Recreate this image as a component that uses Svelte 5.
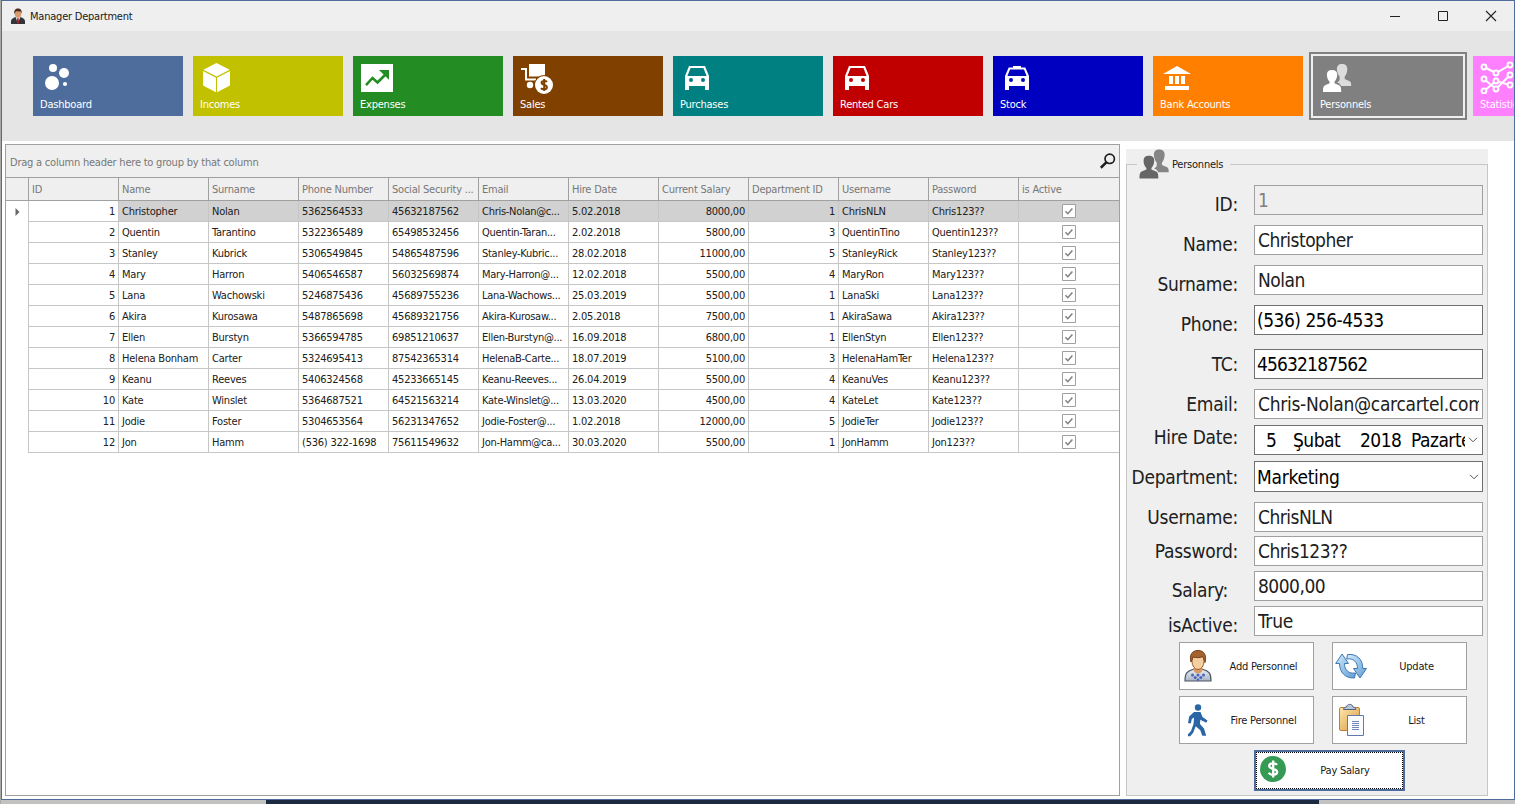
<script>
  const tiles = [
    { label: 'Dashboard', color: '#4f6d9c', icon: 'dots' },
    { label: 'Incomes', color: '#c2c100', icon: 'cube' },
    { label: 'Expenses', color: '#238c23', icon: 'chart' },
    { label: 'Sales', color: '#804000', icon: 'sales' },
    { label: 'Purchases', color: '#008080', icon: 'car' },
    { label: 'Rented Cars', color: '#c00000', icon: 'car' },
    { label: 'Stock', color: '#0000c0', icon: 'taxi' },
    { label: 'Bank Accounts', color: '#ff8000', icon: 'bank' },
    { label: 'Personnels', color: '#808080', icon: 'people', selected: true },
    { label: 'Statistics', color: '#ff80ff', icon: 'stats' }
  ];

  const headers = ['ID', 'Name', 'Surname', 'Phone Number', 'Social Security ...', 'Email', 'Hire Date',
    'Current Salary', 'Department ID', 'Username', 'Password', 'is Active'];
  const rightAligned = [0, 7, 8];

  const rows = [
    ['1', 'Christopher', 'Nolan', '5362564533', '45632187562', 'Chris-Nolan@c...', '5.02.2018', '8000,00', '1', 'ChrisNLN', 'Chris123??'],
    ['2', 'Quentin', 'Tarantino', '5322365489', '65498532456', 'Quentin-Taran...', '2.02.2018', '5800,00', '3', 'QuentinTino', 'Quentin123??'],
    ['3', 'Stanley', 'Kubrick', '5306549845', '54865487596', 'Stanley-Kubric...', '28.02.2018', '11000,00', '5', 'StanleyRick', 'Stanley123??'],
    ['4', 'Mary', 'Harron', '5406546587', '56032569874', 'Mary-Harron@...', '12.02.2018', '5500,00', '4', 'MaryRon', 'Mary123??'],
    ['5', 'Lana', 'Wachowski', '5246875436', '45689755236', 'Lana-Wachows...', '25.03.2019', '5500,00', '1', 'LanaSki', 'Lana123??'],
    ['6', 'Akira', 'Kurosawa', '5487865698', '45689321756', 'Akira-Kurosaw...', '2.05.2018', '7500,00', '1', 'AkiraSawa', 'Akira123??'],
    ['7', 'Ellen', 'Burstyn', '5366594785', '69851210637', 'Ellen-Burstyn@...', '16.09.2018', '6800,00', '1', 'EllenStyn', 'Ellen123??'],
    ['8', 'Helena Bonham', 'Carter', '5324695413', '87542365314', 'HelenaB-Carte...', '18.07.2019', '5100,00', '3', 'HelenaHamTer', 'Helena123??'],
    ['9', 'Keanu', 'Reeves', '5406324568', '45233665145', 'Keanu-Reeves...', '26.04.2019', '5500,00', '4', 'KeanuVes', 'Keanu123??'],
    ['10', 'Kate', 'Winslet', '5364687521', '64521563214', 'Kate-Winslet@...', '13.03.2020', '4500,00', '4', 'KateLet', 'Kate123??'],
    ['11', 'Jodie', 'Foster', '5304653564', '56231347652', 'Jodie-Foster@...', '1.02.2018', '12000,00', '5', 'JodieTer', 'Jodie123??'],
    ['12', 'Jon', 'Hamm', '(536) 322-1698', '75611549632', 'Jon-Hamm@ca...', '30.03.2020', '5500,00', '1', 'JonHamm', 'Jon123??']
  ];

  // gap: space above the row; drop: label offset below the top of the field
  const fields = [
    { label: 'ID:', value: '1', gap: 0, drop: 4, kind: 'off' },
    { label: 'Name:', value: 'Christopher', gap: 10, drop: 4 },
    { label: 'Surname:', value: 'Nolan', gap: 10, drop: 4 },
    { label: 'Phone:', value: '(536) 256-4533', gap: 10, drop: 4, kind: 'native' },
    { label: 'TC:', value: '45632187562', gap: 14, drop: 0, kind: 'native digits' },
    { label: 'Email:', value: 'Chris-Nolan@carcartel.com', gap: 10, drop: 0, kind: 'wide' },
    { label: 'Hire Date:', date: ['5', 'Şubat', '2018', 'Pazartesi'], gap: 6, drop: -3, kind: 'native' },
    { label: 'Department:', value: 'Marketing', gap: 6, drop: 1, kind: 'native wide', combo: true },
    { label: 'Username:', value: 'ChrisNLN', gap: 10, drop: 0 },
    { label: 'Password:', value: 'Chris123??', gap: 4, drop: 0 },
    { label: 'Salary:', value: '8000,00', gap: 5, drop: 4, shift: 10 },
    { label: 'isActive:', value: 'True', gap: 5, drop: 4, kind: 'wide' }
  ];
</script>

{#snippet people(front, back)}
  <path fill={back} d="M29 8c3.600 0 5.500 2 5.300 5.500-.2 3.500-1.600 6-2.600 7v2.500l5 2.200c1.200.7 1.500 2 1.500 4.800H28c-.5-1.800-1.600-2.600-4-3.800 1.500-.8 2.400-1.500 2.600-2.300V20.500c-1.300-1.200-2.500-4-2.700-7C23.700 10 25.500 8 29 8z" />
  <path fill={front} d="M19 14c3.600 0 5.300 1.800 5.200 5-.1 3-1.400 5.500-2.700 6.800v1.500l4.500 1.900c1.800.8 2.200 2.600 2.200 6.800H10c0-4.200.4-6 2.200-6.800l4.400-1.900v-1.500c-1.400-1.300-2.600-3.800-2.700-6.800-.1-3.200 1.600-5 5.100-5z" />
{/snippet}

{#snippet tileIcon(name, color)}
  <svg width="42" height="38" viewBox="0 0 42 38" fill="#fff">
    {#if name === 'dots'}
      <circle cx="20" cy="12" r="4" /><circle cx="31" cy="17" r="5" />
      <circle cx="19" cy="27" r="7" /><circle cx="32" cy="28" r="2.100" />
    {:else if name === 'cube'}
      <path d="M23.500 7 36.600 13.700 23.500 20.600 10.400 13.700zM10 15l13 6.700V36.300L10 29.500zM37 15l-13 6.700V36.300l13-6.800z" />
    {:else if name === 'chart'}
      <path d="M8 8h32v28H8z" />
      <path d="M13 29.200 19.500 22l5 4.500 7.500-7.500" fill="none" stroke={color} stroke-width="2.600" />
      <path d="M26 14h10v9.800z" fill={color} />
    {:else if name === 'sales'}
      <path d="M16 8h16v12.500H16z" />
      <path d="M8 13h5v10.500h10" fill="none" stroke="#fff" stroke-width="2" />
      <circle cx="17" cy="29" r="3.200" />
      <circle cx="31" cy="29" r="10" fill={color} /><circle cx="31" cy="29" r="9" />
      <path d="M34 25.800c-.8-1-5.200-1.500-5.400 1 0 2.800 5.300 1.500 5.300 4.400 0 2.700-4.800 2.400-5.900.9M31.200 23v12" fill="none" stroke={color} stroke-width="2" />
    {:else if name === 'car' || name === 'taxi'}
      {#if name === 'car'}
        <path fill-rule="evenodd" d="M16 10h16l4 10v14h-4v-4H16v4h-4V20zM17.600 12l-3.200 8h19.200l-3.200-8z" />
      {:else}
        <path fill-rule="evenodd" d="M20 10h8v1.500h4.300L36 20v14h-4v-4H16v4h-4V20l3.700-8.500H20zM17 13.500 14.400 20h19.200L31 13.500z" />
      {/if}
      <circle cx="18" cy="24" r="2" fill={color} /><circle cx="30" cy="24" r="2" fill={color} />
    {:else if name === 'bank'}
      <path d="M24 10 38 18H10zM16 20h4v8h-4zM22 20h4v8h-4zM28 20h4v8h-4zM12 30h24v4H12z" />
    {:else if name === 'people'}
      {@render people('#fff', '#dcdcdc')}
    {:else}
      <g fill={color} stroke="#fff" stroke-width="2">
        <path fill="none" d="m11 11 12 6 14-8M11 23l12 10 14-14M11 35l12-10 14 4" />
        {#each [[11, 11], [23, 17], [37, 9], [11, 23], [23, 33], [37, 19], [11, 35], [23, 25], [37, 29]] as [x, y]}
          <circle cx={x} cy={y} r="2.400" />
        {/each}
      </g>
    {/if}
  </svg>
{/snippet}

<div class="desk">
  <div class="window">
    <header>
      <svg width="16" height="17" viewBox="0 0 16 17">
        <path d="M1 16v-3c0-2 2-3 4.500-4h5C13 10 15 11 15 13v3z" fill="#30343b" />
        <path d="m5.500 9 2.300 6L10.500 9z" fill="#e8e4e0" /><path d="m7.400 10-.8 4.500L8 16l1-1.500L8.500 10z" fill="#b01c22" />
        <ellipse cx="8" cy="5.500" rx="3.300" ry="4.300" fill="#d79a6c" />
        <path d="M4.300 6C3.800 2 5.500.5 8 .5s4.200 1.700 3.700 5.300L10.800 3.500 6 3.200z" fill="#4b2c1a" />
      </svg>
      <span class="title">Manager Department</span>
      <svg class="controls" width="112" height="12" viewBox="0 0 112 12" fill="none" stroke="#222">
        <path d="M1 6.500h10M49.500 1.500h9v9h-9z" /><path d="m97 1 10 10M107 1 97 11" stroke-width="1.100" />
      </svg>
    </header>

    <nav>
      {#each tiles as t}
        <div class="tile" class:selected={t.selected} style:background={t.color}>
          {@render tileIcon(t.icon, t.color)}
          <span>{t.label}</span>
        </div>
      {/each}
    </nav>

    <main>
      <section class="grid">
        <div class="groupbar">
          <span>Drag a column header here to group by that column</span>
          <svg width="16" height="16" viewBox="0 0 16 16" fill="none" stroke="#1e1e1e">
            <circle cx="9.700" cy="5.800" r="4.700" stroke-width="1.700" /><path d="m6.300 9.400-5.500 5.300" stroke-width="2.600" />
          </svg>
        </div>
        <div class="line head">
          <div class="mark"></div>
          {#each headers as h}<div class="cell">{h}</div>{/each}
        </div>
        {#each rows as r, i}
          <div class="line" class:current={i === 0}>
            <div class="mark">
              {#if i === 0}<svg width="5" height="8" viewBox="0 0 5 8"><path d="M.5 0 4.500 4 .5 8z" fill="#666" /></svg>{/if}
            </div>
            {#each r as c, j}<div class="cell" class:right={rightAligned.includes(j)} class:mail={j === 5}>{c}</div>{/each}
            <div class="cell check">
              <svg width="14" height="14" viewBox="0 0 14 14" fill="none">
                <path d="M.5.5h13v13H.5z" fill="#fff" stroke="#a0a0a0" /><path d="m3.500 7.200 2.300 2.500 4.600-5.300" stroke="#808080" stroke-width="1.500" />
              </svg>
            </div>
          </div>
        {/each}
      </section>

      <section class="panel">
        <div class="legend">
          <svg width="30" height="30" viewBox="9.500 7.500 29 29">{@render people('#666', '#858585')}</svg>
          <span>Personnels</span>
        </div>
        <div class="frame">
          {#each fields as f}
            <div class="field" style:margin-top="{f.gap}px">
              <div class="label" style:margin-top="{f.drop}px" style:padding-right="{f.shift ?? 0}px">{f.label}</div>
              <div class="input {f.kind ?? ''}" class:combo={f.combo}>
                {#if f.date}
                  <div class="date">{#each f.date as d}<span>{d}</span>{/each}</div>
                {:else}
                  <div class="value">{f.value}</div>
                {/if}
                {#if f.date || f.combo}
                  <svg width="10" height="6" viewBox="0 0 10 6" fill="none" stroke="#555"><path d="m1 .8 4 4 4-4" /></svg>
                {/if}
              </div>
            </div>
          {/each}

          <div class="buttons">
            <button>
              <svg width="32" height="34" viewBox="0 0 32 34">
                <defs><linearGradient id="coat" x2="0" y2="1"><stop stop-color="#e9eef5" /><stop offset="1" stop-color="#a9b4c6" /></linearGradient></defs>
                <path d="M3 32c0-7 1.500-10 8-11.500h10C27.500 22 29 25 29 32z" fill="url(#coat)" stroke="#4e5462" stroke-width="1.200" />
                <path d="M11 19h10l-1 3.500c-2 2.500-6 2.500-8 0z" fill="#d99c62" />
                <ellipse cx="16" cy="12.500" rx="6" ry="8" fill="#f5cf9f" stroke="#9a5a2b" />
                <path d="M9 13C7 6 10 1.500 16 1.500S25 6 23 13.500c-.5-3-1.500-4.500-2.500-6-3 2-7 1-9.500.5-.8 1.500-1 3-2 5z" fill="#a5612e" stroke="#75401c" />
                <g fill="#4b66bd"><circle cx="10.500" cy="26" r="1.500" /><circle cx="16" cy="26" r="1.500" /><circle cx="21.500" cy="26" r="1.500" /><circle cx="13.200" cy="28.500" r="1.500" /><circle cx="18.800" cy="28.500" r="1.500" /><circle cx="16" cy="30.800" r="1.200" /></g>
              </svg>
              <span>Add Personnel</span>
            </button>
            <button>
              <svg width="32" height="34" viewBox="0 0 32 34">
                <defs><linearGradient id="sync" x2="1" y2="1"><stop stop-color="#d3ecfb" /><stop offset="1" stop-color="#5f9dd6" /></linearGradient></defs>
                <g fill="url(#sync)" stroke="#3c78b4" stroke-linejoin="round">
                  <path d="M7 5 .7 14.500H4.500C4.500 23 10 29.500 19.500 29l1-5C13 25 9.500 20.500 9.500 14.500H13.500z" />
                  <path d="M25 29 31.500 19.500H27.700C28 10.500 22 4.500 12.500 5.500l-.8 4.500C19 9 22.500 13.500 22.500 19.500H18.500z" />
                </g>
              </svg>
              <span>Update</span>
            </button>
            <button>
              <svg width="32" height="34" viewBox="0 0 32 34" fill="#2a66a6">
                <circle cx="16" cy="4.500" r="3.200" />
                <path d="M12 9h6.500l2 5 5 3.500-1.200 2.200-6-3-.3 4.300 4 4.500 2.200 7.200h-3.900l-2-5.500-4.600-4-2.500 6.500-3 3.500H6l-.2-1.700 3.200-3.500 2.500-7 .6-6.500-2.300 1.500L8.800 20.500 6 20 7.200 13.500z" />
              </svg>
              <span>Fire Personnel</span>
            </button>
            <button>
              <svg width="32" height="34" viewBox="0 0 32 34">
                <defs><linearGradient id="board" x2="1" y2="1"><stop stop-color="#ffe7ad" /><stop offset="1" stop-color="#d99a40" /></linearGradient></defs>
                <rect x="4.500" y="4.500" width="20" height="23" rx="1.500" fill="url(#board)" stroke="#bb8235" />
                <path d="M8.500 6.500c0-2 1.500-2 3-2.500.5-3.500 6-3.500 6.500 0 1.500.5 3 .5 3 2.500z" fill="#b9c7dd" stroke="#53627c" />
                <path d="M12.500 12.500h16v20h-16z" fill="#fafcff" stroke="#6179ad" />
                <path d="M17 18.500h7M17 20.500h7M17 22.500h7M17 24.500h7M17 26.500h7" stroke="#7288ba" />
              </svg>
              <span>List</span>
            </button>
          </div>
          <button class="pay">
            <svg width="28" height="28" viewBox="0 0 28 28">
              <circle cx="14" cy="14" r="13" fill="#359a54" />
              <path d="M18 9.800c-1.300-2-7.600-2.200-7.800 1 0 4 8 2.200 8 6.300 0 3.500-7 3.300-8.500.7M14.200 5.500v17" fill="none" stroke="#fff" stroke-width="2.300" />
            </svg>
            <span>Pay Salary</span>
          </button>
        </div>
      </section>
    </main>
  </div>
  <footer><i></i><b></b></footer>
</div>

<style>
  :global(body) { margin: 0; overflow: hidden; }
  .desk {
    width: 1515px; height: 804px; box-sizing: border-box; padding-left: 1px; overflow: hidden;
    background: #a9a9a7; color: #202020;
    font: 11px/14px Tahoma, 'DejaVu Sans Condensed', 'DejaVu Sans', sans-serif; letter-spacing: -0.22px;
  }
  .window { box-sizing: border-box; width: 1514px; height: 800px; border: 1px solid #4f6d9c; background: #fff; display: flex; flex-direction: column; overflow: hidden; }
  svg { display: block; flex: none; }
  header { flex: none; height: 30px; background: #efefef; display: flex; align-items: center; padding: 0 13px 0 8px; }
  .title { margin-left: 4px; flex: 1; padding-top: 1px; }
  nav { flex: none; box-sizing: border-box; height: 110px; background: #e5e5e5; padding: 25px 0 0 31px; display: flex; gap: 10px; overflow: hidden; }
  .tile { flex: none; width: 150px; height: 60px; color: #fff; }
  .tile.selected { outline: 2px solid #808080; outline-offset: 2px; box-shadow: 0 0 0 2px #efefef; }
  .tile span { display: block; padding: 4px 0 0 7px; }
  main { flex: 1; display: flex; align-items: flex-start; padding: 3px 26px 3px 3px; }
  .grid { box-sizing: border-box; width: 1115px; height: 652px; border: 1px solid #a0a0a0; }
  .groupbar { height: 32px; background: #efefef; border-bottom: 1px solid #a0a0a0; color: #777; display: flex; align-items: center; justify-content: space-between; padding: 0 3px 0 4px; }
  .groupbar span { padding-top: 3px; }
  .line { display: grid; grid-template-columns: 23px repeat(11, 90px) 100px; height: 21px; }
  .cell, .mark { box-sizing: border-box; border-right: 1px solid #c6c6c6; }
  .cell { border-bottom: 1px solid #c6c6c6; padding: 4px 3px 0 3px; white-space: nowrap; overflow: hidden; }
  .cell:last-child { border-right: 0; }
  .right { text-align: right; }
  .mail { letter-spacing: -0.28px; }
  .mark { display: flex; align-items: center; justify-content: center; }
  .head { height: 23px; background: #efefef; color: #777; }
  .head .cell, .head .mark { border-color: #a0a0a0; border-bottom: 1px solid #a0a0a0; }
  .head .cell { padding-top: 5px; }
  .current .cell { background: #d1d1d1; }
  .current .cell:nth-child(2) { background: #fff; }
  .check { display: flex; justify-content: center; padding-top: 3px; }
  .panel { box-sizing: border-box; width: 362px; height: 647px; margin: 5px 0 0 6px; background: #efefef; }
  .legend { position: relative; display: flex; align-items: center; gap: 3px; height: 30px; width: 91px; margin-left: 11px; padding-left: 2px; background: #efefef; }
  .legend span { padding-top: 2px; }
  .frame { box-sizing: border-box; height: 632px; margin-top: -15px; border: 1px solid #c6c6c6; padding-top: 20px; }
  .field { display: flex; align-items: flex-start; justify-content: flex-end; padding-right: 4px; height: 30px; }
  .label { font-size: 19px; line-height: 30px; letter-spacing: -0.25px; margin-right: 16px; white-space: nowrap; }
  .input { flex: none; box-sizing: border-box; width: 229px; height: 30px; border: 1px solid #a0a0a0; background: #fff; display: flex; align-items: center; font-size: 19px; line-height: 28px; letter-spacing: -0.5px; padding: 0 3px; white-space: nowrap; }
  .value { flex: 1; overflow: hidden; }
  .wide { letter-spacing: -0.27px; }
  .digits { letter-spacing: -0.85px; }
  .off { background: #efefef; color: #808080; }
  .native { border-color: #707070; color: #000; padding-left: 2px; }
  .field:has(.combo) { height: 31px; }
  .combo { height: 31px; }
  .date { flex: none; display: flex; width: 208px; overflow: hidden; padding-left: 9px; box-sizing: border-box; }
  .date span { flex: none; }
  .date span:nth-child(1) { width: 27px; }
  .date span:nth-child(2) { width: 67px; }
  .date span:nth-child(3) { width: 51px; }
  .date + svg { margin-left: 3px; }
  button { box-sizing: border-box; font: inherit; letter-spacing: inherit; color: inherit; background: #fff; border: 1px solid #a0a0a0; border-radius: 0; padding: 0 0 0 2px; display: flex; align-items: center; }
  button span { flex: 1; text-align: center; padding-top: 1px; }
  .buttons { display: grid; grid-template-columns: 135px 135px; grid-auto-rows: 48px; gap: 6px 18px; margin: 6px 0 0 52px; }
  .pay { width: 151px; height: 41px; border: 2px solid #4f6d9c; outline: 1px dotted #000; outline-offset: -3px; margin: 6px 0 0 127px; }
  .pay svg { margin: -3px 0 0 1px; }
  footer { height: 4px; display: flex; background: #c2c2c0; }
  footer i { width: 265px; }
  footer b { width: 1053px; background: #1b2a41; }
</style>
